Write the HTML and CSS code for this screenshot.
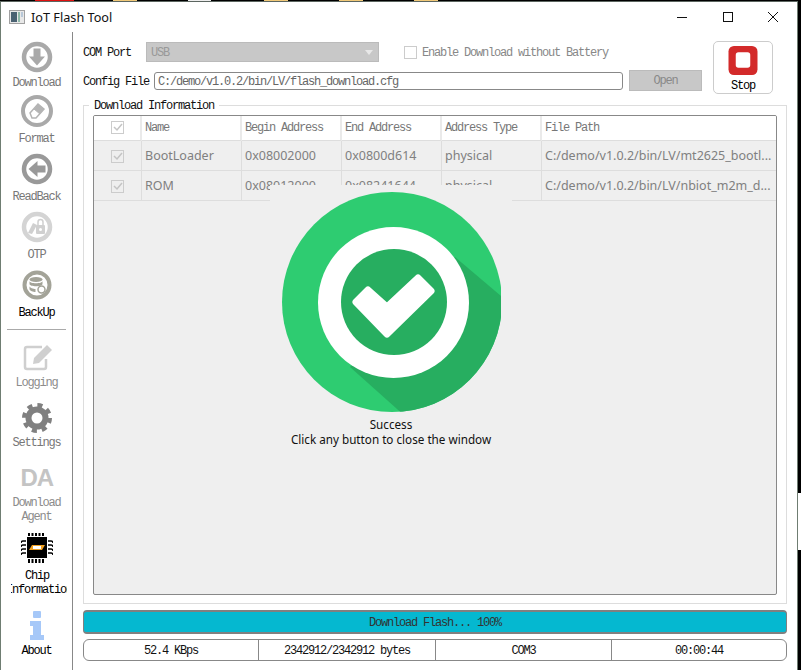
FILE: index.html
```html
<!DOCTYPE html>
<html lang="en">
<head>
  <meta charset="UTF-8">
  <title>IoT Flash Tool</title>
  <link rel="stylesheet" href="styles.css">
</head>
<body>

  <!-- bits of the desktop that show around the window -->
  <div class="desk-bit red"></div>
  <div class="desk-bit tan t1"></div>
  <div class="desk-bit pale"></div>
  <div class="desk-bit tan t2"></div>
  <div class="desk-bit tan t3"></div>
  <div class="desk-bit tan t4"></div>
  <div class="desk-side"></div>

  <div class="window">
    <div class="titlebar">
      <svg class="app-icon" width="16" height="14" viewBox="0 0 16 14">
        <rect x="0.5" y="0.5" width="15" height="13" fill="#e8e8e8" stroke="#a0a0a0"/>
        <rect x="2" y="2" width="6" height="10" fill="#4a6272"/>
        <rect x="9" y="2" width="2" height="10" fill="#8fb8a8"/>
        <rect x="12" y="2" width="2" height="5" fill="#b8c8d8"/>
      </svg>
      <span class="app-title">IoT Flash Tool</span>
      <div class="win-controls">
        <svg width="12" height="12" viewBox="0 0 12 12"><path d="M0 6.5H10" stroke="#111" fill="none"/></svg>
        <svg width="12" height="12" viewBox="0 0 12 12"><rect x="1.5" y="1.5" width="9" height="9" stroke="#111" fill="none"/></svg>
        <svg width="12" height="12" viewBox="0 0 12 12"><path d="M1 1L11 11M11 1L1 11" stroke="#111" fill="none"/></svg>
      </div>
    </div>

    <div class="content">
      <div class="sidebar">
        <div class="nav-item first">
          <svg class="nav-icon" viewBox="0 0 32 32">
            <circle cx="16" cy="16" r="13" fill="#fff" stroke="#a9a9a9" stroke-width="4.5"/>
            <path d="M12.5 7.5h7v8h4.5l-8 9-8-9h4.5z" fill="#a9a9a9"/>
          </svg>
          <span class="nav-label">Download</span>
        </div>
        <div class="nav-item tall near">
          <svg class="nav-icon" viewBox="0 0 32 32">
            <circle cx="16" cy="16" r="14" fill="#fff" stroke="#a9a9a9" stroke-width="4"/>
            <path d="M9 18l8-9 6 5-8 9h-4z" fill="none" stroke="#b4b4b4" stroke-width="1.5"/>
            <path d="M13 14l6 5" stroke="#b4b4b4" fill="none"/>
            <path d="M17 9l6 5-4 5-6-5z" fill="#b4b4b4"/>
          </svg>
          <span class="nav-label">Format</span>
        </div>
        <div class="nav-item tall">
          <svg class="nav-icon" viewBox="0 0 32 32">
            <circle cx="16" cy="16" r="13" fill="#fff" stroke="#999" stroke-width="4.5"/>
            <path d="M24.5 12.5v7h-8v4.5l-9-8 9-8v4.500z" fill="#999"/>
          </svg>
          <span class="nav-label">ReadBack</span>
        </div>
        <div class="nav-item tall">
          <svg class="nav-icon" viewBox="0 0 32 32">
            <circle cx="16" cy="16" r="13" fill="#fff" stroke="#d4d4d4" stroke-width="4.500"/>
            <path d="M7 22l5-10 4 2-5 9z" fill="#d0d0d0"/>
            <rect x="15" y="14" width="9" height="9" rx="1" fill="#d0d0d0"/>
            <path d="M17 14v-3a2.500 2.500 0 0 1 5 0v3" fill="none" stroke="#d0d0d0" stroke-width="1.500"/>
            <circle cx="19.500" cy="18.500" r="1.500" fill="#fff"/>
          </svg>
          <span class="nav-label">OTP</span>
        </div>
        <div class="nav-item tall">
          <svg class="nav-icon" viewBox="0 0 32 32">
            <circle cx="16" cy="16" r="12.500" fill="#fff" stroke="#a3a398" stroke-width="4"/>
            <ellipse cx="15" cy="10.500" rx="6.500" ry="2.500" fill="#a3a398"/>
            <path d="M8.500 12v3c0 3 13 3 13 0v-3c0 3-13 3-13 0zM8.500 17v3c0 2 4 3 6 3v-3c-2 0-6-1-6-3z" fill="#a3a398"/>
            <circle cx="20.500" cy="20.500" r="3.500" fill="#fff" stroke="#a3a398" stroke-width="1.500"/>
          </svg>
          <span class="nav-label dark">BackUp</span>
        </div>
        <div class="nav-sep"></div>
        <div class="nav-item logging">
          <svg class="nav-icon" viewBox="0 0 32 32">
            <path d="M25 18v8a2 2 0 0 1-2 2H6a2 2 0 0 1-2-2V8a2 2 0 0 1 2-2h15" fill="none" stroke="#cfcfcf" stroke-width="2.500"/>
            <path d="M12 23l1-6L26 4l5 5-13 13z" fill="#cfcfcf"/>
          </svg>
          <span class="nav-label light">Logging</span>
        </div>
        <div class="nav-item settings tight">
          <svg class="nav-icon" viewBox="0 0 32 32">
            <circle cx="16" cy="16" r="11.500" fill="#808080"/>
            <circle cx="16" cy="16" r="12.500" fill="none" stroke="#808080" stroke-width="5" stroke-dasharray="4.900 4.917"/>
            <circle cx="16" cy="16" r="5.500" fill="#fff"/>
          </svg>
          <span class="nav-label">Settings</span>
        </div>
        <div class="nav-item settings tight">
          <span class="nav-icon da-mark">DA</span>
          <span class="nav-label light">Download<br>Agent</span>
        </div>
        <div class="nav-item chip">
          <svg class="nav-icon" viewBox="0 0 32 32">
            <rect x="6" y="4" width="20" height="21" fill="#000"/>
            <path d="M11 12h13l-3 5H8z" fill="#f0a020"/>
            <rect x="12" y="13" width="8" height="3" fill="#fff"/>
            <path d="M8 0v3M11.500 0v3M15 0v3M18.500 0v3M22 0v3M8 26v4M11.500 26v4M15 26v4M18.500 26v4M22 26v4" stroke="#000" stroke-width="2"/>
            <path d="M5 8H2Q0 8 0 10M5 12H2Q0 12 0 14M5 16H2Q0 16 0 18M5 20H2Q0 20 0 22M27 8h3q2 0 2 2M27 12h3q2 0 2 2M27 16h3q2 0 2 2M27 20h3q2 0 2 2" stroke="#000" stroke-width="1.500" fill="none"/>
          </svg>
          <span class="nav-label dark clipped">Chip<br><span class="clip-line"><span>Information</span></span></span>
        </div>
        <div class="nav-item about near2">
          <svg class="nav-icon" viewBox="0 0 32 32">
            <rect x="12" y="2" width="8" height="7" rx="1" fill="#a6c8f8"/>
            <path d="M9 12h11v14h3v5H9v-5h3v-9H9z" fill="#a6c8f8"/>
          </svg>
          <span class="nav-label dark">About</span>
        </div>
      </div>

      <div class="main">
        <div class="top">
          <div class="form">
            <div class="form-row com-row">
              <label class="field-label com-label">COM Port</label>
              <div class="combo">
                <span class="combo-text">USB</span>
                <span class="combo-arrow"></span>
              </div>
              <span class="check-box empty"></span>
              <span class="battery-label">Enable Download without Battery</span>
            </div>
            <div class="form-row cfg-row">
              <label class="field-label cfg-label">Config File</label>
              <div class="path-input">C:/demo/v1.0.2/bin/LV/flash_download.cfg</div>
              <div class="open-btn">Open</div>
            </div>
          </div>
          <div class="stop-btn">
            <svg width="32" height="32" viewBox="0 0 32 32">
              <rect width="32" height="32" rx="6" fill="#d32a2a"/>
              <rect x="8" y="7" width="16" height="17" rx="3" fill="#fff"/>
            </svg>
            <span>Stop</span>
          </div>
        </div>

        <div class="group">
          <span class="group-title">Download Information</span>
          <div class="table-frame">
            <table class="file-table">
              <thead>
                <tr>
                  <th class="col-check"><span class="check-box"><svg width="11" height="11" viewBox="0 0 11 11"><path d="M2 5l3 3 5-6" fill="none" stroke="#c4c4c4" stroke-width="1.500"/></svg></span></th>
                  <th class="col-addr">Name</th>
                  <th class="col-addr">Begin Address</th>
                  <th class="col-addr">End Address</th>
                  <th class="col-addr">Address Type</th>
                  <th>File Path</th>
                </tr>
              </thead>
              <tbody>
                <tr>
                  <td><span class="check-box"><svg width="11" height="11" viewBox="0 0 11 11"><path d="M2 5l3 3 5-6" fill="none" stroke="#c4c4c4" stroke-width="1.500"/></svg></span></td>
                  <td>BootLoader</td>
                  <td>0x08002000</td>
                  <td>0x0800d614</td>
                  <td>physical</td>
                  <td>C:/demo/v1.0.2/bin/LV/mt2625_bootl...</td>
                </tr>
                <tr>
                  <td><span class="check-box"><svg width="11" height="11" viewBox="0 0 11 11"><path d="M2 5l3 3 5-6" fill="none" stroke="#c4c4c4" stroke-width="1.500"/></svg></span></td>
                  <td>ROM</td>
                  <td>0x08012000</td>
                  <td>0x08241644</td>
                  <td>physical</td>
                  <td>C:/demo/v1.0.2/bin/LV/nbiot_m2m_d...</td>
                </tr>
              </tbody>
            </table>
          </div>
        </div>

        <div class="progress">Download Flash... 100%</div>

        <div class="status">
          <div class="status-cell speed">52.4 KBps</div>
          <div class="status-cell bytes">2342912/2342912 bytes</div>
          <div class="status-cell port">COM3</div>
          <div class="status-cell time">00:00:44</div>
        </div>

        <!-- success popup over the table -->
        <div class="success">
          <svg class="success-icon" width="242" height="232" viewBox="0 0 242 232">
            <defs>
              <clipPath id="badgeClip"><rect x="0" y="0" width="231" height="232"/></clipPath>
              <clipPath id="discClip"><circle cx="122" cy="117" r="110"/></clipPath>
            </defs>
            <g clip-path="url(#badgeClip)">
              <circle cx="122" cy="117" r="110" fill="#2ecc71"/>
              <polygon points="185,72 231,111 231,232 136,232 80,182" fill="#27ae60" clip-path="url(#discClip)"/>
            </g>
            <circle cx="123.500" cy="117.500" r="75.500" fill="#fff"/>
            <circle cx="124" cy="117" r="53" fill="#27ae60"/>
            <polygon points="86,117 98,105 117,122 148,93 161,106 117,149" fill="#fff" stroke="#fff" stroke-width="7" stroke-linejoin="round"/>
          </svg>
          <div class="success-text">Success</div>
          <div class="success-text">Click any button to close the window</div>
        </div>
      </div>
    </div>
  </div>

</body>
</html>
```

FILE: styles.css
```css
* {
  box-sizing: border-box;
}

html, body {
  margin: 0;
  padding: 0;
}

body {
  position: relative;
  width: 801px;
  height: 670px;
  overflow: hidden;
  background-color: #000;
  font-family: "Liberation Mono", monospace;
  font-size: 12px;
  letter-spacing: -1.2px;
}

.desk-bit {
  position: absolute;
  top: 0;
  height: 1px;
}

.desk-bit.red { left: 35px; width: 39px; background-color: #e01010; }
.desk-bit.pale { left: 188px; width: 23px; background-color: #eee; }
.desk-bit.tan { width: 24px; background-color: #f0c878; }
.desk-bit.t1 { left: 113px; }
.desk-bit.t2 { left: 264px; }
.desk-bit.t3 { left: 339px; }
.desk-bit.t4 { left: 414px; }

.desk-side {
  position: absolute;
  left: 798px;
  top: 493px;
  width: 3px;
  height: 57px;
  background-color: #fff;
}

.window {
  margin-top: 1px;
  width: 798px;
  height: 669px;
  background-color: #fff;
  border-left: 1px solid #6f7d72;
  border-top: 1px solid #5c6660;
  border-right: 1px solid #6f7d72;
  display: flex;
  flex-direction: column;
}

.titlebar {
  height: 30px;
  display: flex;
  align-items: center;
  padding-left: 8px;
}

.app-title {
  margin-left: 6px;
  font-family: "Noto Sans", sans-serif;
  font-size: 12.7px;
  letter-spacing: 0;
  color: #111;
}

.win-controls {
  margin-left: auto;
  margin-right: 18px;
  display: flex;
  gap: 33px;
}

.content {
  flex: 1;
  display: flex;
  position: relative;
  min-height: 0;
}

.sidebar {
  width: 72px;
  flex-shrink: 0;
  border-right: 1px solid #888;
  display: flex;
  flex-direction: column;
  align-items: center;
}

.nav-item {
  display: flex;
  flex-direction: column;
  align-items: center;
  gap: 2px;
  width: 100%;
  margin-top: 8px;
}

.nav-item.first { margin-top: 9px; }
.nav-item.tall { gap: 4px; }
.nav-item.near { margin-top: 6px; }
.nav-item.logging { margin-top: 11px; }
.nav-item.settings { margin-top: 13px; }
.nav-item.tight { gap: 1px; }
.nav-item.chip { margin-top: 10px; gap: 3px; }
.nav-item.about { margin-top: 13px; }

.nav-icon {
  width: 32px;
  height: 32px;
  display: block;
}

.da-mark {
  font-family: "Liberation Sans", sans-serif;
  font-weight: bold;
  font-size: 24px;
  letter-spacing: -1px;
  line-height: 32px;
  text-align: center;
  color: #c4c4c4;
}

.nav-label {
  padding-top: 1px;
  margin-bottom: -1px;
  line-height: 14px;
  text-align: center;
  color: #777;
  white-space: nowrap;
}

.nav-label.dark { color: #000; }
.nav-label.light { color: #8c8c8c; }

.clip-line {
  display: flex;
  justify-content: center;
  width: 56px;
  margin-left: 10px;
  overflow: hidden;
}

.clipped {
  align-self: flex-start;
  width: 72px;
}

.clip-line span {
  flex-shrink: 0;
}

.nav-sep {
  width: 59px;
  height: 1px;
  margin-top: 10px;
  background-color: #aaa;
}

.main {
  flex: 1;
  min-width: 0;
  padding: 9px 10px 0;
}

.top {
  display: flex;
  height: 53px;
}

.form {
  width: 619px;
}

.form-row {
  display: flex;
  align-items: center;
}

.com-row {
  height: 20px;
  margin-top: 1px;
}

.cfg-row {
  height: 21px;
  margin-top: 8px;
}

.field-label {
  padding-top: 2px;
  color: #111;
}

.com-label { width: 63px; }
.cfg-label { width: 71px; }

.combo {
  width: 233px;
  height: 20px;
  padding-left: 4px;
  background-color: #c8c8c8;
  border: 1px solid #bbb;
  color: #999;
  display: flex;
  align-items: center;
  justify-content: space-between;
}

.combo-text {
  padding-top: 2px;
}

.combo-arrow {
  margin-right: 5px;
  border-left: 4px solid transparent;
  border-right: 4px solid transparent;
  border-top: 5px solid #e8e8e8;
}

.check-box {
  display: inline-block;
  width: 13px;
  height: 13px;
  border: 1px solid #ccc;
  background-color: transparent;
  vertical-align: middle;
}

.check-box svg {
  display: block;
}

.check-box.empty {
  margin-left: 25px;
}

.battery-label {
  margin-left: 5px;
  padding-top: 2px;
  color: #888;
}

.path-input {
  width: 469px;
  height: 18px;
  line-height: 18px;
  padding-left: 3px;
  border: 1px solid #888;
  border-radius: 3px;
  color: #666;
}

.open-btn {
  width: 73px;
  height: 21px;
  margin-left: 6px;
  line-height: 21px;
  text-align: center;
  background-color: #c8c8c8;
  border: 1px solid #bbb;
  color: #888;
}

.stop-btn {
  width: 60px;
  height: 53px;
  margin-left: 11px;
  padding-top: 4px;
  border: 1px solid #ccc;
  border-radius: 5px;
  display: flex;
  flex-direction: column;
  align-items: center;
  color: #000;
}

.stop-btn span {
  line-height: 14px;
  margin-top: 4px;
}

.group {
  position: relative;
  height: 499px;
  margin-top: 11px;
  padding: 9px 9px 8px;
  border: 1px solid #ddd;
}

.group-title {
  position: absolute;
  left: 5px;
  top: -6px;
  padding: 0 5px;
  line-height: 13px;
  background-color: #fff;
  color: #111;
}

.table-frame {
  height: 480px;
  border: 1px solid #888;
  border-radius: 2px;
  background-color: #efefef;
  overflow: hidden;
}

.file-table {
  width: 682px;
  table-layout: fixed;
  border-collapse: separate;
  border-spacing: 0;
}

.file-table th {
  height: 25px;
  padding: 0 0 1px 3px;
  background-color: #fff;
  border-right: 2px solid #eaeaea;
  border-bottom: 1px solid #ddd;
  text-align: left;
  font-weight: normal;
  color: #777;
}

.file-table td {
  height: 30px;
  padding: 0 0 1px 3px;
  border-right: 1px solid #ddd;
  border-bottom: 1px solid #ddd;
  font-family: "Noto Sans", sans-serif;
  font-size: 12.5px;
  letter-spacing: 0;
  color: #808080;
  white-space: nowrap;
  overflow: hidden;
}

.file-table th:first-child,
.file-table td:first-child {
  padding: 0;
  text-align: center;
}

.file-table th:last-child,
.file-table td:last-child {
  border-right: none;
}

.col-check { width: 48px; }
.col-addr { width: 100px; }

.progress {
  height: 24px;
  margin-top: 6px;
  line-height: 22px;
  text-align: center;
  background-color: #05b8d0;
  border: 2px solid #808080;
  border-left-width: 1px;
  border-right-width: 1px;
  border-radius: 4px;
  color: #333;
}

.status {
  display: flex;
  height: 22px;
  margin-top: 5px;
  border: 1px solid #888;
  border-radius: 6px;
  color: #111;
}

.status-cell {
  line-height: 22px;
  text-align: center;
  border-right: 1px solid #888;
}

.status-cell.speed { width: 175px; }
.status-cell.bytes { width: 177px; }
.status-cell.port { width: 176px; }
.status-cell.time { flex: 1; border-right: none; }

.success {
  position: absolute;
  left: 269px;
  top: 153px;
  width: 242px;
  height: 265px;
  background-color: #efefef;
}

.success-icon {
  display: block;
}

.success-text {
  font-family: "Noto Sans", sans-serif;
  font-size: 11.7px;
  letter-spacing: 0;
  line-height: 15px;
  text-align: center;
  color: #111;
}
```
